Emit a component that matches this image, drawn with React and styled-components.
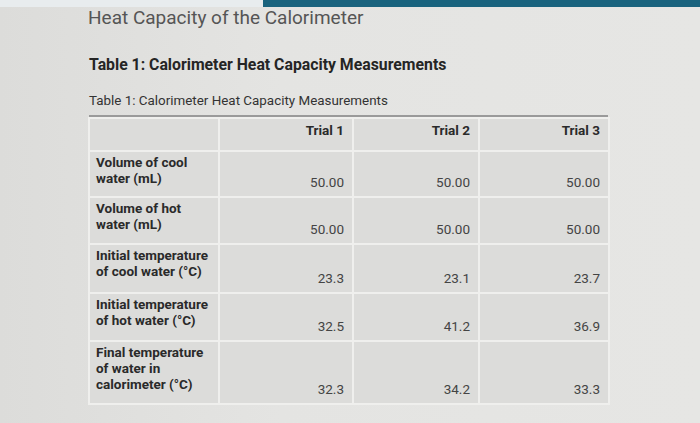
import React from 'react';
import styled, { createGlobalStyle } from 'styled-components';

const GlobalStyle = createGlobalStyle`
  html, body {
    margin: 0;
    padding: 0;
    background: #e2e2e0;
  }
  body {
    font-family: Roboto, "Liberation Sans", sans-serif;
  }
`;

const Page = styled.div`
  width: 700px;
  height: 423px;
  overflow: hidden;
  background: linear-gradient(90deg, #dcdcda 0%, #e4e4e2 40%, #e6e6e4 100%);
  display: flex;
  flex-direction: column;
`;

const TopStrip = styled.div`
  display: flex;
  height: 7px;
  flex-shrink: 0;
`;

const StripPart = styled.div`
  flex: ${(p) => p.$grow};
  background: ${(p) => p.$color};
`;

const Content = styled.div`
  padding: 0 0 0 88px;
  width: 520px;
`;

const Title = styled.h1`
  margin: 0;
  font-size: 19px;
  font-weight: 400;
  color: #555;
  line-height: 22px;
`;

const Heading = styled.h2`
  margin: 26px 0 0 1px;
  font-size: 15.8px;
  font-weight: 700;
  color: #252525;
  line-height: 20px;
`;

const Caption = styled.div`
  margin: 18px 0 0 1px;
  font-size: 13.4px;
  color: #333;
  line-height: 16px;
  padding-bottom: 6px;
  border-bottom: 2px solid #9a9a9a;
`;

const Table = styled.table`
  border-collapse: collapse;
  width: 520px;
  table-layout: fixed;
`;

const Cell = styled.td`
  border: 2px solid #efefed;
  background: #dcdcda;
  padding: 0 8px 0 6px;
  height: ${(p) => p.$h}px;
  font-size: 13.5px;
  line-height: 16px;
  box-sizing: border-box;
  text-align: ${(p) => (p.$label ? 'left' : 'right')};
  vertical-align: ${(p) => (p.$label ? 'top' : 'bottom')};
  padding-top: ${(p) => (p.$label ? 2 : 0)}px;
  padding-bottom: ${(p) => (p.$label ? 0 : 6)}px;
  font-weight: ${(p) => (p.$bold ? 700 : 400)};
  color: ${(p) => (p.$bold ? '#2a2a2a' : '#444')};
`;

const HeadCell = styled.th`
  border: 2px solid #efefed;
  background: #dcdcda;
  height: 33px;
  padding: 3px 8px 0 6px;
  font-size: 13.5px;
  line-height: 16px;
  font-weight: 700;
  color: #2a2a2a;
  text-align: right;
  vertical-align: top;
  box-sizing: border-box;
`;

const rows = [
  { label: ['Volume of cool', 'water (mL)'], values: ['50.00', '50.00', '50.00'], h: 46 },
  { label: ['Volume of hot', 'water (mL)'], values: ['50.00', '50.00', '50.00'], h: 47 },
  { label: ['Initial temperature', 'of cool water (°C)'], values: ['23.3', '23.1', '23.7'], h: 49 },
  { label: ['Initial temperature', 'of hot water (°C)'], values: ['32.5', '41.2', '36.9'], h: 48 },
  { label: ['Final temperature', 'of water in', 'calorimeter (°C)'], values: ['32.3', '34.2', '33.3'], h: 63 },
];

export default function App() {
  return (
    <Page>
      <GlobalStyle />
      <TopStrip>
        <StripPart $grow={263} $color="#e8ecee" />
        <StripPart $grow={437} $color="#19637e" />
      </TopStrip>
      <Content>
        <Title>Heat Capacity of the Calorimeter</Title>
        <Heading>Table 1: Calorimeter Heat Capacity Measurements</Heading>
        <Caption>Table 1: Calorimeter Heat Capacity Measurements</Caption>
        <Table>
          <colgroup>
            <col style={{ width: 130 }} />
            <col style={{ width: 134 }} />
            <col style={{ width: 126 }} />
            <col style={{ width: 130 }} />
          </colgroup>
          <thead>
            <tr>
              <HeadCell />
              <HeadCell>Trial 1</HeadCell>
              <HeadCell>Trial 2</HeadCell>
              <HeadCell>Trial 3</HeadCell>
            </tr>
          </thead>
          <tbody>
            {rows.map((r, i) => (
              <tr key={i}>
                <Cell $label $bold $h={r.h}>
                  {r.label.map((l, j) => (
                    <div key={j}>{l}</div>
                  ))}
                </Cell>
                {r.values.map((v, j) => (
                  <Cell key={j} $h={r.h}>
                    {v}
                  </Cell>
                ))}
              </tr>
            ))}
          </tbody>
        </Table>
      </Content>
    </Page>
  );
}
